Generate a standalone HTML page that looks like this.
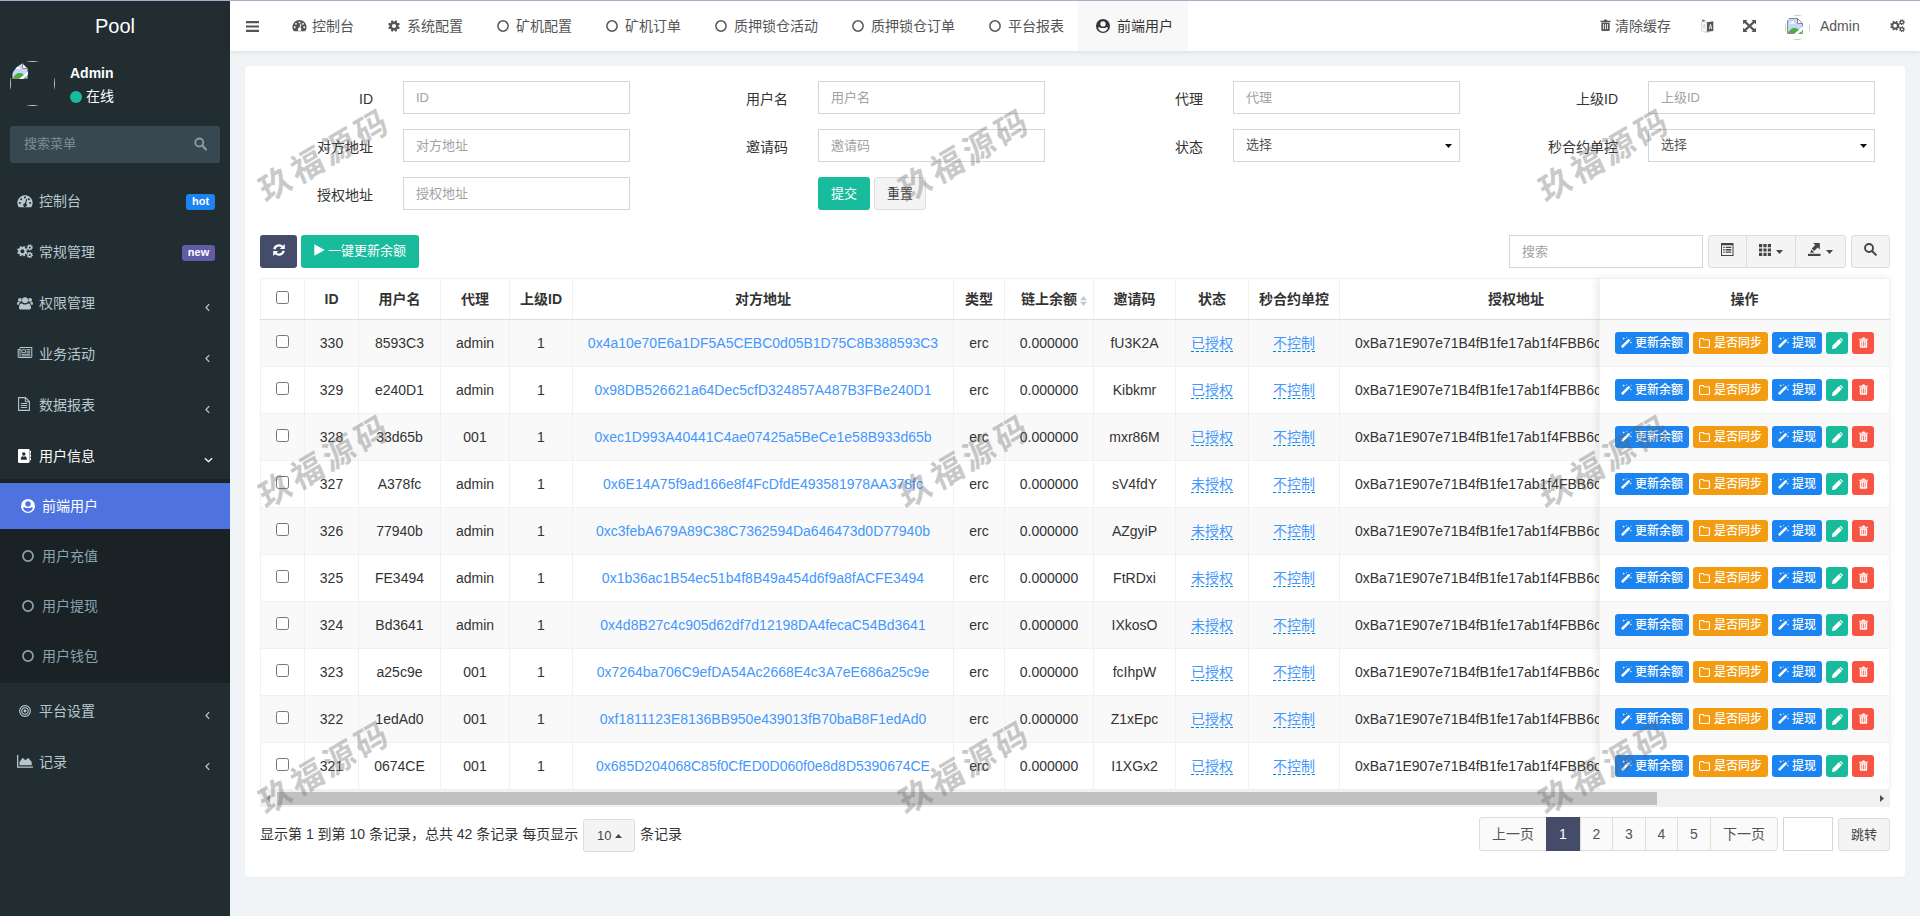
<!DOCTYPE html>
<html lang="zh-CN">
<head>
<meta charset="utf-8">
<title>Pool</title>
<style>
*{box-sizing:border-box;}
html,body{margin:0;padding:0;}
body{width:1920px;height:916px;overflow:hidden;position:relative;background:#f1f4f6;
  font-family:"Liberation Sans","Noto Sans CJK SC",sans-serif;font-size:14px;color:#333;line-height:20px;}
svg{display:block;}
.abs{position:absolute;}
/* top line */
#topline{position:absolute;left:0;top:0;width:1920px;height:1px;background:#a7aec9;z-index:50;}
/* sidebar */
#sidebar{position:absolute;left:0;top:0;width:230px;height:916px;background:#222d32;color:#b8c7ce;}
#logo{position:absolute;left:0;top:1px;width:230px;height:50px;line-height:50px;text-align:center;color:#fff;font-size:20px;}
#avatar{position:absolute;left:10px;top:61px;width:45px;height:45px;border-radius:50%;overflow:hidden;}
#avatar i{position:absolute;left:0;top:0;width:45px;height:45px;border:1px solid rgba(255,255,255,.75);display:block;}
.uname{position:absolute;left:70px;top:63px;color:#fff;font-weight:bold;font-size:14px;line-height:20px;}
.ustat{position:absolute;left:86px;top:86px;color:#fff;font-size:14px;line-height:20px;}
.udot{position:absolute;left:70px;top:91px;width:12px;height:12px;border-radius:50%;background:#18bc9c;}
#sbsearch{position:absolute;left:10px;top:126px;width:210px;height:37px;background:#374850;border-radius:3px;color:#7d8d95;line-height:36px;padding-left:14px;font-size:13px;}
.mi{position:absolute;left:0;width:230px;height:46px;line-height:46px;color:#b8c7ce;font-size:14px;}
.mi .ic{position:absolute;left:17px;top:15px;}
.mi .tx{position:absolute;left:39px;top:0;}
.mi .ar{position:absolute;left:205px;top:23px;}
.mi.open{color:#fff;}
.badge{position:absolute;top:16px;height:16px;line-height:15px;border-radius:3px;color:#fff;font-size:11px;font-weight:bold;text-align:center;}
#submenu{position:absolute;left:0;top:479px;width:230px;height:204px;background:#1a2226;}
.si{position:absolute;left:0;width:230px;height:46px;line-height:46px;color:#8aa4af;font-size:14px;}
.si .ic{position:absolute;left:21px;top:16px;}
.si .tx{position:absolute;left:42px;top:0;}
.si.act{background:#4e73df;color:#fff;}
/* header */
#header{position:absolute;left:230px;top:1px;width:1690px;height:50px;background:#fff;box-shadow:0 1px 4px rgba(0,21,41,.10);}
.tab{position:absolute;top:0;height:50px;line-height:50px;color:#555;font-size:14px;white-space:nowrap;}
.tab .ic{position:absolute;top:18px;}
.tab.act{background:#f8f8f8;color:#333;}
.hr{position:absolute;top:0;height:50px;line-height:50px;color:#555;font-size:14px;white-space:nowrap;}

#panel{position:absolute;left:245px;top:66px;width:1660px;height:811px;background:#fff;border-radius:4px;box-shadow:0 1px 2px rgba(0,0,0,.04);}
.lb{position:absolute;width:120px;text-align:right;line-height:20px;font-size:14px;color:#333;}
.inp{position:absolute;width:227px;height:33px;border:1px solid #d2d6de;background:#fff;line-height:31px;padding-left:12px;color:#a3a3a3;font-size:13px;}
.inp.sel{color:#555;line-height:29px;}
.btn{position:absolute;height:33px;line-height:31px;border-radius:3px;text-align:center;font-size:13px;border:1px solid transparent;white-space:nowrap;}
.bdef{background:#f4f4f4;border-color:#ddd;color:#444;}
#tbl{position:absolute;left:260px;top:278px;width:1339px;height:512px;overflow:hidden;}
#tbl table,#fix table{border-collapse:collapse;table-layout:fixed;}
#tbl th,#tbl td,#fix th,#fix td{border:1px solid #f1f1f1;text-align:center;padding:0;overflow:hidden;white-space:nowrap;font-size:14px;color:#333;}
#tbl th,#fix th{height:41px;font-weight:bold;border-bottom:1px solid #ddd;background:#fff;}
#tbl td,#fix td{height:47px;}
tr.o td{background:#f9f9f9;}
tr.e td{background:#fff;}
a.ad{color:#4397fd;text-decoration:none;}
a.ed{color:#4397fd;text-decoration:none;border-bottom:1px dashed #0088cc;padding-bottom:0;}
.cb{display:inline-block;width:13px;height:13px;border:1px solid #767676;border-radius:2.5px;background:#fff;vertical-align:middle;position:relative;top:-3px;}
#fix{position:absolute;left:1599px;top:278px;width:291px;height:512px;background:#fff;box-shadow:-2px 0 8px rgba(0,0,0,.09);overflow:hidden;}
.ob{display:inline-block;height:22px;line-height:20px;border-radius:3px;color:#fff;font-size:12px;font-weight:500;vertical-align:middle;position:relative;white-space:nowrap;text-align:left;border:1px solid transparent;}
.ob svg{position:absolute;}
.pg{position:absolute;top:817px;height:34px;line-height:32px;border:1px solid #ddd;background:#fafafa;color:#555;text-align:center;font-size:14px;}
.wm{position:absolute;width:240px;height:50px;line-height:50px;text-align:center;font-size:33px;font-weight:700;color:rgba(100,100,100,.34);transform:rotate(-30.5deg) skewX(-7deg);letter-spacing:4px;z-index:40;white-space:nowrap;font-family:"Noto Sans CJK SC","Liberation Sans",sans-serif;}

</style>
</head>
<body>
<div id="sidebar">
  <div id="logo">Pool</div>
  <div id="avatar"><i></i><svg class="abs" style="left:2px;top:2px" width="16" height="16" viewBox="0 0 16 16"><path d="M.500 .500h10l5 5v10H.500z" fill="#c5d6f6" stroke="#8a8a8a" stroke-width="1"/><path d="M10.500 .500v5h5z" fill="#fff" stroke="#8a8a8a" stroke-width="1" stroke-linejoin="round"/><path d="M2.500 5.800c0-.8.700-1.300 1.400-1.200.300-.900 1.200-1.400 2.100-1.200.900.200 1.500.900 1.500 1.700.500 0 .900.300.900.700z" fill="#fff"/><path d="M1 15c1.500-3 3.500-5 6.500-5s4.500 1.500 5.500 3l2 2z" fill="#4eae3a"/><path d="M6.800 16.200L16.200 8v3.200l-5.300 5z" fill="#fff"/></svg></div>
  <div class="uname">Admin</div>
  <div class="udot"></div>
  <div class="ustat">在线</div>
  <div id="sbsearch">搜索菜单
    <svg class="abs" style="left:184px;top:11px" width="13" height="14" viewBox="0 0 13 14"><circle cx="5.3" cy="5.5" r="4" fill="none" stroke="#8e9ba1" stroke-width="1.8"/><path d="M8.3 8.6l3.6 3.8" stroke="#8e9ba1" stroke-width="2.2" stroke-linecap="round"/></svg>
  </div>
  <div class="mi " style="top:178px"><svg class="ic" style="top:16px" width="16" height="14" viewBox="0 0 16 14"><path fill="#b8c7ce" fill-rule="evenodd" d="M8 1.2a7.6 7.6 0 0 0-6.5 11.5c.2.35.5.5.9.5h11.2c.4 0 .7-.15.9-.5A7.6 7.6 0 0 0 8 1.200zM7.00 3.60a1.0 1.0 0 1 0 2.00 0a1.0 1.0 0 1 0 -2.00 0zM3.20 5.20a1.0 1.0 0 1 0 2.00 0a1.0 1.0 0 1 0 -2.00 0zM10.80 5.20a1.0 1.0 0 1 0 2.00 0a1.0 1.0 0 1 0 -2.00 0zM1.90 8.90a1.0 1.0 0 1 0 2.00 0a1.0 1.0 0 1 0 -2.00 0zM12.10 8.90a1.0 1.0 0 1 0 2.00 0a1.0 1.0 0 1 0 -2.00 0zM9.2 4.9l-1.2 4.3a1.9 1.9 0 1 0 1.1.3l1.1-4.3z"/></svg><span class="tx">控制台</span><span class="badge" style="left:186px;width:29px;background:#1c84f0">hot</span></div>
<div class="mi " style="top:229px"><svg class="ic" style="top:15px" width="16" height="14" viewBox="0 0 16 14"><path fill="#b8c7ce" fill-rule="evenodd" d="M9.54 7.88L10.66 8.41L9.99 10.04L8.82 9.63L7.85 10.61L8.27 11.78L6.64 12.46L6.10 11.34L4.72 11.34L4.19 12.46L2.56 11.79L2.97 10.62L1.99 9.65L0.82 10.07L0.14 8.44L1.26 7.90L1.26 6.52L0.14 5.99L0.81 4.36L1.98 4.77L2.95 3.79L2.53 2.62L4.16 1.94L4.70 3.06L6.08 3.06L6.61 1.94L8.24 2.61L7.83 3.78L8.81 4.75L9.98 4.33L10.66 5.96L9.54 6.50zM3.40 7.20a2.0 2.0 0 1 0 4.00 0a2.0 2.0 0 1 0 -4.00 0z"/><path fill="#b8c7ce" fill-rule="evenodd" d="M15.20 3.33L16.00 3.52L15.79 4.54L14.98 4.40L14.54 5.05L14.98 5.74L14.11 6.32L13.64 5.65L12.87 5.80L12.68 6.60L11.66 6.39L11.80 5.58L11.15 5.14L10.46 5.58L9.88 4.71L10.55 4.24L10.40 3.47L9.60 3.28L9.81 2.26L10.62 2.40L11.06 1.75L10.62 1.06L11.49 0.48L11.96 1.15L12.73 1.00L12.92 0.20L13.94 0.41L13.80 1.22L14.45 1.66L15.14 1.22L15.72 2.09L15.05 2.56zM11.80 3.40a1.0 1.0 0 1 0 2.00 0a1.0 1.0 0 1 0 -2.00 0z"/><path fill="#b8c7ce" fill-rule="evenodd" d="M15.20 10.93L16.00 11.12L15.79 12.14L14.98 12.00L14.54 12.65L14.98 13.34L14.11 13.92L13.64 13.25L12.87 13.40L12.68 14.20L11.66 13.99L11.80 13.18L11.15 12.74L10.46 13.18L9.88 12.31L10.55 11.84L10.40 11.07L9.60 10.88L9.81 9.86L10.62 10.00L11.06 9.35L10.62 8.66L11.49 8.08L11.96 8.75L12.73 8.60L12.92 7.80L13.94 8.01L13.80 8.82L14.45 9.26L15.14 8.82L15.72 9.69L15.05 10.16zM11.80 11.00a1.0 1.0 0 1 0 2.00 0a1.0 1.0 0 1 0 -2.00 0z"/></svg><span class="tx">常规管理</span><span class="badge" style="left:182px;width:33px;background:#605ca8">new</span></div>
<div class="mi " style="top:280px"><svg class="ic" style="top:16px" width="16" height="14" viewBox="0 0 16 14"><circle cx="8" cy="4.2" r="3" fill="#b8c7ce"/><path fill="#b8c7ce" d="M3.4 13.4c-.9 0-1.4-.5-1.4-1.3 0-2.6.7-4.6 2.6-4.9.8.8 2 1.3 3.4 1.3s2.600-.5 3.400-1.300c1.900.3 2.600 2.300 2.600 4.900 0 .8-.5 1.300-1.400 1.300z"/><circle cx="2.900" cy="3.9" r="1.9" fill="#b8c7ce"/><circle cx="13.1" cy="3.9" r="1.9" fill="#b8c7ce"/><path fill="#b8c7ce" d="M.1 7.600c0-1.200.5-1.800 1.300-1.800.5.400 1.200.700 1.900.600-.9.600-1.500 1.400-1.700 2.700h-.6c-.6 0-.9-.6-.9-1.500zM15.900 7.600c0-1.200-.5-1.800-1.300-1.800-.5.400-1.200.700-1.900.600.9.600 1.500 1.400 1.700 2.700h.6c.6 0 .9-.6.9-1.500z"/></svg><span class="tx">权限管理</span><svg class="ar" width="5" height="9" viewBox="0 0 6 10"><path fill="none" stroke="#b8c7ce" stroke-width="1.500" d="M5 1L1.200 5 5 9"/></svg></div>
<div class="mi " style="top:331px"><svg class="ic" style="top:16px;left:17px" width="16" height="11" viewBox="0 0 16 12"><path fill="none" stroke="#b8c7ce" stroke-width="1.1" d="M2.600 .600h12.800v10.100c0 .400-.300.700-.700.700H1.300c-.400 0-.700-.300-.700-.700V2.600h2"/><path fill="none" stroke="#b8c7ce" stroke-width="1" d="M2.600 .600v10"/><path fill="none" stroke="#b8c7ce" stroke-width="1" d="M4.500 3h4v3.200h-4z"/><path stroke="#b8c7ce" stroke-width="1" d="M9.800 2.900h4M9.800 4.600h4M9.800 6.300h4M4.200 8h9.600M4.200 9.700h9.600"/></svg><span class="tx">业务活动</span><svg class="ar" width="5" height="9" viewBox="0 0 6 10"><path fill="none" stroke="#b8c7ce" stroke-width="1.500" d="M5 1L1.200 5 5 9"/></svg></div>
<div class="mi " style="top:382px"><svg class="ic" style="top:15px;left:18px" width="12" height="14" viewBox="0 0 12 14"><path fill="none" stroke="#b8c7ce" stroke-width="1.1" d="M.600 .600h6.800l4 4v8.800H.600z"/><path fill="none" stroke="#b8c7ce" stroke-width="1" d="M7.300 .700v4.100h4.100"/><path stroke="#b8c7ce" stroke-width="1" d="M2.800 6.500h6.400M2.800 8.500h6.400M2.800 10.500h6.400"/></svg><span class="tx">数据报表</span><svg class="ar" width="5" height="9" viewBox="0 0 6 10"><path fill="none" stroke="#b8c7ce" stroke-width="1.500" d="M5 1L1.200 5 5 9"/></svg></div>
<div class="mi open" style="top:433px"><svg class="ic" style="top:16px;left:18px" width="13" height="14" viewBox="0 0 13 14"><path fill="#fff" fill-rule="evenodd" d="M1.200 0h9.200c.7 0 1.200.5 1.200 1.200v11.600c0 .7-.5 1.200-1.200 1.200H1.200C.5 14 0 13.500 0 12.800V1.200C0 .5.5 0 1.200 0zM4.10 5.00a1.7 1.7 0 1 0 3.40 0a1.7 1.7 0 1 0 -3.40 0zM2.800 10.200c0-1.700.7-2.700 1.700-2.900.4.300.8.500 1.300.5s.9-.2 1.300-.5c1 .2 1.700 1.200 1.700 2.900 0 .4-.3.600-.7.600H3.500c-.4 0-.7-.2-.7-.6z"/><path fill="#fff" d="M12 1.800h.7c.2 0 .3.100.3.300v2c0 .2-.1.300-.3.300H12zM12 5.300h.7c.2 0 .3.100.3.300v2c0 .2-.1.300-.3.300H12zM12 8.800h.7c.2 0 .3.100.3.300v2c0 .2-.1.300-.3.300H12z"/></svg><span class="tx">用户信息</span><svg class="ar" style="left:204px;top:24px" width="9" height="6" viewBox="0 0 10 6"><path fill="none" stroke="#fff" stroke-width="1.500" d="M1 1l4 3.800L9 1"/></svg></div>
<div id="submenu">
<div class="si act" style="top:4px"><svg class="ic" width="14" height="14" viewBox="0 0 14 14"><path fill="#fff" fill-rule="evenodd" d="M0.00 7.00a7 7 0 1 1 14.00 0a7 7 0 1 1 -14.00 0zM4.30 4.90a2.7 2.7 0 1 0 5.40 0a2.7 2.7 0 1 0 -5.40 0zM3.000 7.900C4.200 8.700 5.600 9.100 7 9.100S9.800 8.700 11.000 7.900C11.800 8.200 11.900 9.000 11.600 9.800C10.700 11.700 9.000 12.700 7 12.700S3.300 11.700 2.400 9.800C2.100 9.000 2.200 8.200 3.000 7.900z"/></svg><span class="tx">前端用户</span></div>
<div class="si" style="top:54px"><svg class="ic" style="top:17px;left:22px" width="12" height="12" viewBox="0 0 12 12"><circle cx="6" cy="6" r="5.05" fill="none" stroke="#8aa4af" stroke-width="1.7"/></svg><span class="tx">用户充值</span></div>
<div class="si" style="top:104px"><svg class="ic" style="top:17px;left:22px" width="12" height="12" viewBox="0 0 12 12"><circle cx="6" cy="6" r="5.05" fill="none" stroke="#8aa4af" stroke-width="1.7"/></svg><span class="tx">用户提现</span></div>
<div class="si" style="top:154px"><svg class="ic" style="top:17px;left:22px" width="12" height="12" viewBox="0 0 12 12"><circle cx="6" cy="6" r="5.05" fill="none" stroke="#8aa4af" stroke-width="1.7"/></svg><span class="tx">用户钱包</span></div>
</div>
<div class="mi " style="top:688px"><svg class="ic" style="top:17px;left:19px" width="12" height="12" viewBox="0 0 13 13"><circle cx="6.500" cy="6.500" r="5.800" fill="none" stroke="#b8c7ce" stroke-width="1.200"/><circle cx="6.500" cy="6.500" r="3.500" fill="none" stroke="#b8c7ce" stroke-width="1.200"/><circle cx="6.500" cy="6.500" r="1.600" fill="#b8c7ce"/></svg><span class="tx">平台设置</span><svg class="ar" width="5" height="9" viewBox="0 0 6 10"><path fill="none" stroke="#b8c7ce" stroke-width="1.500" d="M5 1L1.200 5 5 9"/></svg></div>
<div class="mi " style="top:739px"><svg class="ic" style="top:16px" width="16" height="13" viewBox="0 0 16 13"><path fill="#b8c7ce" d="M0 0h1.300v11.500H16v1.300H0z"/><path fill="#b8c7ce" d="M2.500 10.300V7l3.200-4.300 2.600 2.600 3-2.300 3.400 4v3.300z"/></svg><span class="tx">记录</span><svg class="ar" width="5" height="9" viewBox="0 0 6 10"><path fill="none" stroke="#b8c7ce" stroke-width="1.500" d="M5 1L1.200 5 5 9"/></svg></div>

</div>
<div id="header">
  <svg class="abs" style="left:16px;top:20px" width="13" height="11" viewBox="0 0 13 11"><path fill="#555" d="M0 0h13v2.200H0zM0 4.400h13v2.200H0zM0 8.800h13V11H0z"/></svg><div class="tab" style="left:44px;width:96px"><svg class="ic" style="left:18px;top:18px" width="15" height="13" viewBox="0 0 16 14"><path fill="#555" fill-rule="evenodd" d="M8 1.2a7.6 7.6 0 0 0-6.5 11.5c.2.35.5.5.9.5h11.2c.4 0 .7-.15.9-.5A7.6 7.6 0 0 0 8 1.200zM7.00 3.60a1.0 1.0 0 1 0 2.00 0a1.0 1.0 0 1 0 -2.00 0zM3.20 5.20a1.0 1.0 0 1 0 2.00 0a1.0 1.0 0 1 0 -2.00 0zM10.80 5.20a1.0 1.0 0 1 0 2.00 0a1.0 1.0 0 1 0 -2.00 0zM1.90 8.90a1.0 1.0 0 1 0 2.00 0a1.0 1.0 0 1 0 -2.00 0zM12.10 8.90a1.0 1.0 0 1 0 2.00 0a1.0 1.0 0 1 0 -2.00 0zM9.2 4.9l-1.2 4.3a1.9 1.9 0 1 0 1.1.3l1.1-4.3z"/></svg><span class="abs" style="left:38px;top:0">控制台</span></div>
<div class="tab" style="left:140px;width:109px"><svg class="ic" style="left:18px;top:19px" width="12" height="12" viewBox="0 0 12 12"><path fill="#555" fill-rule="evenodd" d="M10.54 6.74L11.85 7.34L11.10 9.16L9.75 8.66L8.68 9.74L9.18 11.09L7.38 11.84L6.77 10.54L5.26 10.54L4.66 11.85L2.84 11.10L3.34 9.75L2.26 8.68L0.91 9.18L0.16 7.38L1.46 6.77L1.46 5.26L0.15 4.66L0.90 2.84L2.25 3.34L3.32 2.26L2.82 0.91L4.62 0.16L5.23 1.46L6.74 1.46L7.34 0.15L9.16 0.90L8.66 2.25L9.74 3.32L11.09 2.82L11.84 4.62L10.54 5.23zM3.90 6.00a2.1 2.1 0 1 0 4.20 0a2.1 2.1 0 1 0 -4.20 0z"/></svg><span class="abs" style="left:37px;top:0">系统配置</span></div>
<div class="tab" style="left:249px;width:109px"><svg class="ic" style="left:18px;top:19px" width="12" height="12" viewBox="0 0 12 12"><circle cx="6" cy="6" r="5.15" fill="none" stroke="#555" stroke-width="1.5"/></svg><span class="abs" style="left:37px;top:0">矿机配置</span></div>
<div class="tab" style="left:358px;width:109px"><svg class="ic" style="left:18px;top:19px" width="12" height="12" viewBox="0 0 12 12"><circle cx="6" cy="6" r="5.15" fill="none" stroke="#555" stroke-width="1.5"/></svg><span class="abs" style="left:37px;top:0">矿机订单</span></div>
<div class="tab" style="left:467px;width:137px"><svg class="ic" style="left:18px;top:19px" width="12" height="12" viewBox="0 0 12 12"><circle cx="6" cy="6" r="5.15" fill="none" stroke="#555" stroke-width="1.5"/></svg><span class="abs" style="left:37px;top:0">质押锁仓活动</span></div>
<div class="tab" style="left:604px;width:137px"><svg class="ic" style="left:18px;top:19px" width="12" height="12" viewBox="0 0 12 12"><circle cx="6" cy="6" r="5.15" fill="none" stroke="#555" stroke-width="1.5"/></svg><span class="abs" style="left:37px;top:0">质押锁仓订单</span></div>
<div class="tab" style="left:741px;width:107px"><svg class="ic" style="left:18px;top:19px" width="12" height="12" viewBox="0 0 12 12"><circle cx="6" cy="6" r="5.15" fill="none" stroke="#555" stroke-width="1.5"/></svg><span class="abs" style="left:37px;top:0">平台报表</span></div>
<div class="tab act" style="left:848px;width:110px"><svg class="ic" style="left:18px;top:18px" width="14" height="14" viewBox="0 0 14 14"><path fill="#333" fill-rule="evenodd" d="M0.00 7.00a7 7 0 1 1 14.00 0a7 7 0 1 1 -14.00 0zM4.30 4.90a2.7 2.7 0 1 0 5.40 0a2.7 2.7 0 1 0 -5.40 0zM3.000 7.900C4.200 8.700 5.600 9.100 7 9.100S9.800 8.700 11.000 7.900C11.800 8.200 11.900 9.000 11.600 9.800C10.700 11.700 9.000 12.700 7 12.700S3.300 11.700 2.400 9.800C2.100 9.000 2.200 8.200 3.000 7.900z"/></svg><span class="abs" style="left:39px;top:0">前端用户</span></div>
<div class="hr" style="left:1370px"><svg class="abs" style="left:0;top:18px" width="11" height="12" viewBox="0 0 11 13"><path fill="#555" d="M0 1.800h3.500L4.300.500h2.400l.8 1.300H11V3.200H0z"/><path fill="#555" fill-rule="evenodd" d="M1 3.900h9v7.900c0 .7-.5 1.200-1.200 1.200H2.200C1.500 13 1 12.500 1 11.800zM3 5.300v5.900h.9V5.300zM5.050 5.300v5.900h.9V5.300zM7.100 5.300v5.900H8V5.300z"/></svg><span class="abs" style="left:15px;top:0">清除缓存</span></div>
<svg class="abs" style="left:1471px;top:18px" width="13" height="14" viewBox="0 0 13 14"><path fill="#fff" stroke="#c4c4c4" stroke-width=".7" d="M.500 2.800l5.500 .800v9L.500 11.600z"/><path fill="#555" d="M1.300 .300l3.600 1.700-3.600 .500z"/><path fill="#555" d="M6 3.200l6.300-.900v9.600L6 12.800z"/><path fill="#fff" d="M7.900 10.200l1.200-5h.9l1.200 5h-.8l-.25-1.100H8.950l-.25 1.100zm1.200-1.800h.9l-.45-2z"/><path stroke="#b9b9c9" stroke-width=".7" fill="none" d="M1.800 6.200c1 .3 2 .3 3-.2M3.300 5v1.200c0 1.500-.6 2.800-1.600 3.500M2.300 7.500c.6 1 1.500 1.600 2.500 1.900"/><path stroke="#c4c4c4" stroke-width=".7" fill="none" d="M3.500 13.600h4.500"/></svg><svg preserveAspectRatio="none" class="abs" style="left:1513px;top:19px" width="13" height="12" viewBox="0 0 14 14"><path fill="#555" d="M0 0h5L3.400 1.600 7 5.200 10.600 1.600 9 0h5v5l-1.600-1.600L8.800 7l3.600 3.600L14 9v5H9l1.600-1.600L7 8.800l-3.600 3.600L5 14H0V9l1.600 1.600L5.200 7 1.600 3.400 0 5z"/></svg><div class="abs" style="left:1555px;top:14px;width:25px;height:25px;border-radius:50%;overflow:hidden"><i style="position:absolute;left:0;top:0;width:25px;height:25px;border:1px solid #c8c8c8;display:block"></i><svg class="abs" style="left:2px;top:3px" width="16" height="16" viewBox="0 0 16 16"><path d="M.500 .500h10l5 5v10H.500z" fill="#c5d6f6" stroke="#8a8a8a" stroke-width="1"/><path d="M10.500 .500v5h5z" fill="#fff" stroke="#8a8a8a" stroke-width="1" stroke-linejoin="round"/><path d="M2.500 5.800c0-.8.700-1.300 1.400-1.200.300-.900 1.200-1.400 2.100-1.200.900.200 1.500.900 1.500 1.700.500 0 .900.300.900.700z" fill="#fff"/><path d="M1 15c1.500-3 3.500-5 6.500-5s4.500 1.500 5.500 3l2 2z" fill="#4eae3a"/><path d="M6.800 16.200L16.200 8v3.200l-5.300 5z" fill="#fff"/></svg></div><div class="hr" style="left:1590px">Admin</div><svg class="abs" style="left:1660px;top:18px" width="15" height="13" viewBox="0 0 16 14"><path fill="#555" fill-rule="evenodd" d="M9.54 7.88L10.66 8.41L9.99 10.04L8.82 9.63L7.85 10.61L8.27 11.78L6.64 12.46L6.10 11.34L4.72 11.34L4.19 12.46L2.56 11.79L2.97 10.62L1.99 9.65L0.82 10.07L0.14 8.44L1.26 7.90L1.26 6.52L0.14 5.99L0.81 4.36L1.98 4.77L2.95 3.79L2.53 2.62L4.16 1.94L4.70 3.06L6.08 3.06L6.61 1.94L8.24 2.61L7.83 3.78L8.81 4.75L9.98 4.33L10.66 5.96L9.54 6.50zM3.40 7.20a2.0 2.0 0 1 0 4.00 0a2.0 2.0 0 1 0 -4.00 0z"/><path fill="#555" fill-rule="evenodd" d="M15.20 3.33L16.00 3.52L15.79 4.54L14.98 4.40L14.54 5.05L14.98 5.74L14.11 6.32L13.64 5.65L12.87 5.80L12.68 6.60L11.66 6.39L11.80 5.58L11.15 5.14L10.46 5.58L9.88 4.71L10.55 4.24L10.40 3.47L9.60 3.28L9.81 2.26L10.62 2.40L11.06 1.75L10.62 1.06L11.49 0.48L11.96 1.15L12.73 1.00L12.92 0.20L13.94 0.41L13.80 1.22L14.45 1.66L15.14 1.22L15.72 2.09L15.05 2.56zM11.80 3.40a1.0 1.0 0 1 0 2.00 0a1.0 1.0 0 1 0 -2.00 0z"/><path fill="#555" fill-rule="evenodd" d="M15.20 10.93L16.00 11.12L15.79 12.14L14.98 12.00L14.54 12.65L14.98 13.34L14.11 13.92L13.64 13.25L12.87 13.40L12.68 14.20L11.66 13.99L11.80 13.18L11.15 12.74L10.46 13.18L9.88 12.31L10.55 11.84L10.40 11.07L9.60 10.88L9.81 9.86L10.62 10.00L11.06 9.35L10.62 8.66L11.49 8.08L11.96 8.75L12.73 8.60L12.92 7.80L13.94 8.01L13.80 8.82L14.45 9.26L15.14 8.82L15.72 9.69L15.05 10.16zM11.80 11.00a1.0 1.0 0 1 0 2.00 0a1.0 1.0 0 1 0 -2.00 0z"/></svg>
</div>
<div id="topline"></div>
<div id="panel"></div>
<div class="lb" style="left:253px;top:89px">ID</div><div class="inp" style="left:403px;top:81px">ID</div>
<div class="lb" style="left:668px;top:89px">用户名</div><div class="inp" style="left:818px;top:81px">用户名</div>
<div class="lb" style="left:1083px;top:89px">代理</div><div class="inp" style="left:1233px;top:81px">代理</div>
<div class="lb" style="left:1498px;top:89px">上级ID</div><div class="inp" style="left:1648px;top:81px">上级ID</div>
<div class="lb" style="left:253px;top:137px">对方地址</div><div class="inp" style="left:403px;top:129px">对方地址</div>
<div class="lb" style="left:668px;top:137px">邀请码</div><div class="inp" style="left:818px;top:129px">邀请码</div>
<div class="lb" style="left:1083px;top:137px">状态</div><div class="inp sel" style="left:1233px;top:129px">选择<svg class="abs" style="left:211px;top:14px" width="7" height="4" viewBox="0 0 7 4"><path fill="#111" d="M0 0h7L3.500 4z"/></svg></div>
<div class="lb" style="left:1498px;top:137px">秒合约单控</div><div class="inp sel" style="left:1648px;top:129px">选择<svg class="abs" style="left:211px;top:14px" width="7" height="4" viewBox="0 0 7 4"><path fill="#111" d="M0 0h7L3.500 4z"/></svg></div>
<div class="lb" style="left:253px;top:185px">授权地址</div><div class="inp" style="left:403px;top:177px">授权地址</div>
<div class="btn" style="left:818px;top:177px;width:52px;background:#18bc9c;color:#fff">提交</div><div class="btn bdef" style="left:874px;top:177px;width:52px">重置</div>
<div class="btn" style="left:260px;top:235px;width:37px;background:#444c69"><svg class="abs" style="left:12px;top:8px" width="12" height="12" viewBox="0 0 12 12"><path fill="none" stroke="#fff" stroke-width="2.300" d="M1.300 5.200A4.800 4.800 0 0 1 9.400 2.800M10.700 6.800A4.800 4.800 0 0 1 2.600 9.200"/><path fill="#fff" d="M11.800 .100v5H6.800zM.200 11.900v-5h5z"/></svg></div><div class="btn" style="left:301px;top:235px;width:118px;background:#18bc9c;color:#fff;text-align:left;padding-left:26px;line-height:30px"><svg class="abs" style="left:12px;top:8px" width="11" height="12" viewBox="0 0 11 12"><path fill="#fff" d="M.300 .300l10.400 5.700L.300 11.700z"/></svg>一键更新余额</div>
<div class="inp" style="left:1509px;top:235px;width:194px;height:33px">搜索</div><div class="btn bdef" style="left:1708px;top:235px;width:39px;border-radius:3px 0 0 3px"><svg class="abs" style="left:12px;top:7px" width="13" height="13" viewBox="0 0 13 13"><path fill="#444" fill-rule="evenodd" d="M0 0h12.500v13H0zM1 2.200v9.800h10.500V2.200z"/><path fill="#444" d="M2.200 3.700h1.400v1.300H2.200zM2.200 6.100h1.400v1.300H2.200zM2.200 8.500h1.400v1.300H2.200zM4.600 3.700h5.700v1.300H4.600zM4.600 6.100h5.700v1.300H4.600zM4.600 8.500h5.700v1.300H4.600z"/></svg></div><div class="btn bdef" style="left:1746px;top:235px;width:50px;border-radius:0"><svg class="abs" style="left:12px;top:8px" width="12" height="12" viewBox="0 0 12 12"><path fill="#444" d="M0.0 0.0h3.200v3.200h-3.200zM4.4 0.0h3.200v3.200h-3.200zM8.8 0.0h3.200v3.200h-3.200zM0.0 4.4h3.200v3.200h-3.200zM4.4 4.4h3.200v3.200h-3.200zM8.8 4.4h3.200v3.200h-3.200zM0.0 8.8h3.200v3.200h-3.200zM4.4 8.8h3.200v3.200h-3.200zM8.8 8.8h3.200v3.200h-3.200z"/></svg><svg class="abs" style="left:29px;top:14px" width="7" height="4" viewBox="0 0 7 4"><path fill="#444" d="M0 0h7L3.500 4z"/></svg></div><div class="btn bdef" style="left:1795px;top:235px;width:51px;border-radius:0 3px 3px 0"><svg class="abs" style="left:12px;top:7px" width="13" height="13" viewBox="0 0 13 13"><path fill="#444" d="M0 10.800h12.500V13H0z"/><path fill="#444" d="M5.200 0h6.600v6.600L9.700 4.500 6.200 8 3.800 5.600 7.300 2.100z"/><path fill="#444" d="M2.200 9.800l1.200-3.200 2.600 2.600.2.600z"/></svg><svg class="abs" style="left:30px;top:14px" width="7" height="4" viewBox="0 0 7 4"><path fill="#444" d="M0 0h7L3.500 4z"/></svg></div><div class="btn bdef" style="left:1851px;top:235px;width:39px"><svg class="abs" style="left:12px;top:7px" width="13" height="13" viewBox="0 0 14 14"><circle cx="5.400" cy="5.400" r="4.300" fill="none" stroke="#444" stroke-width="2"/><path d="M8.700 8.700l4.100 4.100" stroke="#444" stroke-width="2.200" stroke-linecap="round"/></svg></div>
<div id="tbl"><table style="width:1432px"><colgroup><col style="width:44px"><col style="width:54px"><col style="width:82px"><col style="width:69px"><col style="width:63px"><col style="width:381px"><col style="width:51px"><col style="width:89px"><col style="width:82px"><col style="width:73px"><col style="width:91px"><col style="width:353px"></colgroup><thead><tr><th><span class="cb"></span></th><th>ID</th><th>用户名</th><th>代理</th><th>上级ID</th><th>对方地址</th><th>类型</th><th><span style="position:relative">链上余额<svg style="position:absolute;left:59px;top:3px" width="7" height="14" viewBox="0 0 9 14"><path fill="#c8c8c8" d="M0 6h9L4.500 .500zM0 8h9l-4.500 5.500z"/></svg></span></th><th>邀请码</th><th>状态</th><th>秒合约单控</th><th>授权地址</th></tr></thead><tbody>
<tr class="o"><td><span class="cb"></span></td><td>330</td><td>8593C3</td><td>admin</td><td>1</td><td><a class="ad">0x4a10e70E6a1DF5A5CEBC0d05B1D75C8B388593C3</a></td><td>erc</td><td>0.000000</td><td>fU3K2A</td><td><a class="ed">已授权</a></td><td><a class="ed">不控制</a></td><td style="text-align:left;padding-left:15px">0xBa71E907e71B4fB1fe17ab1f4FBB6c3A9d2E01F7</td></tr>
<tr class="e"><td><span class="cb"></span></td><td>329</td><td>e240D1</td><td>admin</td><td>1</td><td><a class="ad">0x98DB526621a64Dec5cfD324857A487B3FBe240D1</a></td><td>erc</td><td>0.000000</td><td>Kibkmr</td><td><a class="ed">已授权</a></td><td><a class="ed">不控制</a></td><td style="text-align:left;padding-left:15px">0xBa71E907e71B4fB1fe17ab1f4FBB6c3A9d2E01F7</td></tr>
<tr class="o"><td><span class="cb"></span></td><td>328</td><td>33d65b</td><td>001</td><td>1</td><td><a class="ad">0xec1D993A40441C4ae07425a5BeCe1e58B933d65b</a></td><td>erc</td><td>0.000000</td><td>mxr86M</td><td><a class="ed">已授权</a></td><td><a class="ed">不控制</a></td><td style="text-align:left;padding-left:15px">0xBa71E907e71B4fB1fe17ab1f4FBB6c3A9d2E01F7</td></tr>
<tr class="e"><td><span class="cb"></span></td><td>327</td><td>A378fc</td><td>admin</td><td>1</td><td><a class="ad">0x6E14A75f9ad166e8f4FcDfdE493581978AA378fc</a></td><td>erc</td><td>0.000000</td><td>sV4fdY</td><td><a class="ed">未授权</a></td><td><a class="ed">不控制</a></td><td style="text-align:left;padding-left:15px">0xBa71E907e71B4fB1fe17ab1f4FBB6c3A9d2E01F7</td></tr>
<tr class="o"><td><span class="cb"></span></td><td>326</td><td>77940b</td><td>admin</td><td>1</td><td><a class="ad">0xc3febA679A89C38C7362594Da646473d0D77940b</a></td><td>erc</td><td>0.000000</td><td>AZgyiP</td><td><a class="ed">未授权</a></td><td><a class="ed">不控制</a></td><td style="text-align:left;padding-left:15px">0xBa71E907e71B4fB1fe17ab1f4FBB6c3A9d2E01F7</td></tr>
<tr class="e"><td><span class="cb"></span></td><td>325</td><td>FE3494</td><td>admin</td><td>1</td><td><a class="ad">0x1b36ac1B54ec51b4f8B49a454d6f9a8fACFE3494</a></td><td>erc</td><td>0.000000</td><td>FtRDxi</td><td><a class="ed">未授权</a></td><td><a class="ed">不控制</a></td><td style="text-align:left;padding-left:15px">0xBa71E907e71B4fB1fe17ab1f4FBB6c3A9d2E01F7</td></tr>
<tr class="o"><td><span class="cb"></span></td><td>324</td><td>Bd3641</td><td>admin</td><td>1</td><td><a class="ad">0x4d8B27c4c905d62df7d12198DA4fecaC54Bd3641</a></td><td>erc</td><td>0.000000</td><td>IXkosO</td><td><a class="ed">未授权</a></td><td><a class="ed">不控制</a></td><td style="text-align:left;padding-left:15px">0xBa71E907e71B4fB1fe17ab1f4FBB6c3A9d2E01F7</td></tr>
<tr class="e"><td><span class="cb"></span></td><td>323</td><td>a25c9e</td><td>001</td><td>1</td><td><a class="ad">0x7264ba706C9efDA54Ac2668E4c3A7eE686a25c9e</a></td><td>erc</td><td>0.000000</td><td>fcIhpW</td><td><a class="ed">已授权</a></td><td><a class="ed">不控制</a></td><td style="text-align:left;padding-left:15px">0xBa71E907e71B4fB1fe17ab1f4FBB6c3A9d2E01F7</td></tr>
<tr class="o"><td><span class="cb"></span></td><td>322</td><td>1edAd0</td><td>001</td><td>1</td><td><a class="ad">0xf1811123E8136BB950e439013fB70baB8F1edAd0</a></td><td>erc</td><td>0.000000</td><td>Z1xEpc</td><td><a class="ed">已授权</a></td><td><a class="ed">不控制</a></td><td style="text-align:left;padding-left:15px">0xBa71E907e71B4fB1fe17ab1f4FBB6c3A9d2E01F7</td></tr>
<tr class="e"><td><span class="cb"></span></td><td>321</td><td>0674CE</td><td>001</td><td>1</td><td><a class="ad">0x685D204068C85f0CfED0D060f0e8d8D5390674CE</a></td><td>erc</td><td>0.000000</td><td>I1XGx2</td><td><a class="ed">已授权</a></td><td><a class="ed">不控制</a></td><td style="text-align:left;padding-left:15px">0xBa71E907e71B4fB1fe17ab1f4FBB6c3A9d2E01F7</td></tr>
</tbody></table></div>
<div id="fix"><table style="width:291px"><thead><tr><th>操作</th></tr></thead><tbody>
<tr class="o"><td style="text-align:left;padding-left:15px;font-size:0"><span class="ob" style="width:74px;background:#1c84f0;padding-left:19px"><svg style="left:5px;top:4px" width="11" height="11" viewBox="0 0 12 12"><path fill="#fff" d="M0 10.200L8.300 1.900l1.900 1.900-8.300 8.300z"/><path fill="#fff" d="M3 .200l.45 1.150 1.150.45-1.150.45L3 3.400l-.45-1.150-1.150-.45 1.150-.45zM10.800 5l.35.85.85.35-.85.35-.35.85-.35-.85-.85-.35.85-.35zM6.200 0l.25.600.600.250-.600.250-.250.600-.250-.600-.600-.250.600-.250zM11 .500l.25.600.600.250-.600.250-.250.600-.250-.600-.600-.250.600-.250z"/></svg>更新余额</span><span class="ob" style="width:75px;background:#f39c12;margin-left:4px;padding-left:20px"><svg style="left:5px;top:5px" width="11" height="10" viewBox="0 0 12 11"><path fill="none" stroke="#fff" stroke-width="1.200" d="M.600 1.600c0-.6.4-1 1-1h2.600c.6 0 1 .4 1 1v.4h5.200c.6 0 1 .4 1 1v6.400c0 .6-.4 1-1 1H1.600c-.6 0-1-.4-1-1z"/></svg>是否同步</span><span class="ob" style="width:50px;background:#1c84f0;margin-left:4px;padding-left:19px"><svg style="left:5px;top:4px" width="11" height="11" viewBox="0 0 12 12"><path fill="#fff" d="M0 10.200L8.300 1.900l1.900 1.900-8.300 8.300z"/><path fill="#fff" d="M3 .200l.45 1.150 1.150.45-1.150.45L3 3.400l-.45-1.150-1.150-.45 1.150-.45zM10.800 5l.35.85.85.35-.85.35-.35.85-.35-.85-.85-.35.85-.35zM6.200 0l.25.600.600.250-.600.250-.250.600-.250-.600-.600-.250.600-.250zM11 .500l.25.600.600.250-.600.250-.250.600-.250-.600-.600-.250.600-.250z"/></svg>提现</span><span class="ob" style="width:22px;background:#18bc9c;margin-left:4px"><svg style="left:5px;top:5px" width="11" height="11" viewBox="0 0 12 12"><path fill="#fff" d="M0 12l.6-3.700L7.700 1.200l3.100 3.100-7.100 7.100zM8.400 .600l.4-.4c.3-.3.800-.3 1.100 0l1.900 1.900c.3.300.3.800 0 1.100l-.4.400z"/></svg></span><span class="ob" style="width:22px;background:#f75444;margin-left:4px"><svg style="left:6px;top:4px" width="9" height="11" viewBox="0 0 11 13"><path fill="#fff" d="M0 1.800h3.500L4.300.500h2.400l.8 1.300H11V3.200H0z"/><path fill="#fff" fill-rule="evenodd" d="M1 3.900h9v7.900c0 .7-.5 1.200-1.200 1.200H2.200C1.500 13 1 12.500 1 11.800zM3 5.300v5.900h.9V5.300zM5.050 5.300v5.900h.9V5.300zM7.100 5.300v5.900H8V5.300z"/></svg></span></td></tr>
<tr class="e"><td style="text-align:left;padding-left:15px;font-size:0"><span class="ob" style="width:74px;background:#1c84f0;padding-left:19px"><svg style="left:5px;top:4px" width="11" height="11" viewBox="0 0 12 12"><path fill="#fff" d="M0 10.200L8.300 1.900l1.900 1.900-8.300 8.300z"/><path fill="#fff" d="M3 .200l.45 1.150 1.150.45-1.150.45L3 3.400l-.45-1.150-1.150-.45 1.150-.45zM10.800 5l.35.85.85.35-.85.35-.35.85-.35-.85-.85-.35.85-.35zM6.200 0l.25.600.600.250-.600.250-.250.600-.250-.600-.600-.250.600-.250zM11 .500l.25.600.600.250-.600.250-.250.600-.250-.600-.600-.250.600-.250z"/></svg>更新余额</span><span class="ob" style="width:75px;background:#f39c12;margin-left:4px;padding-left:20px"><svg style="left:5px;top:5px" width="11" height="10" viewBox="0 0 12 11"><path fill="none" stroke="#fff" stroke-width="1.200" d="M.600 1.600c0-.6.4-1 1-1h2.600c.6 0 1 .4 1 1v.4h5.200c.6 0 1 .4 1 1v6.400c0 .6-.4 1-1 1H1.600c-.6 0-1-.4-1-1z"/></svg>是否同步</span><span class="ob" style="width:50px;background:#1c84f0;margin-left:4px;padding-left:19px"><svg style="left:5px;top:4px" width="11" height="11" viewBox="0 0 12 12"><path fill="#fff" d="M0 10.200L8.300 1.900l1.900 1.900-8.300 8.300z"/><path fill="#fff" d="M3 .200l.45 1.150 1.150.45-1.150.45L3 3.400l-.45-1.150-1.150-.45 1.150-.45zM10.800 5l.35.85.85.35-.85.35-.35.85-.35-.85-.85-.35.85-.35zM6.200 0l.25.600.600.250-.600.250-.250.600-.250-.600-.600-.250.600-.250zM11 .500l.25.600.600.250-.600.250-.250.600-.250-.600-.600-.250.600-.250z"/></svg>提现</span><span class="ob" style="width:22px;background:#18bc9c;margin-left:4px"><svg style="left:5px;top:5px" width="11" height="11" viewBox="0 0 12 12"><path fill="#fff" d="M0 12l.6-3.700L7.700 1.200l3.100 3.100-7.100 7.100zM8.400 .600l.4-.4c.3-.3.800-.3 1.100 0l1.900 1.900c.3.300.3.800 0 1.100l-.4.400z"/></svg></span><span class="ob" style="width:22px;background:#f75444;margin-left:4px"><svg style="left:6px;top:4px" width="9" height="11" viewBox="0 0 11 13"><path fill="#fff" d="M0 1.800h3.500L4.300.500h2.400l.8 1.300H11V3.200H0z"/><path fill="#fff" fill-rule="evenodd" d="M1 3.900h9v7.900c0 .7-.5 1.200-1.200 1.200H2.200C1.500 13 1 12.500 1 11.800zM3 5.300v5.900h.9V5.300zM5.050 5.300v5.900h.9V5.300zM7.100 5.300v5.900H8V5.300z"/></svg></span></td></tr>
<tr class="o"><td style="text-align:left;padding-left:15px;font-size:0"><span class="ob" style="width:74px;background:#1c84f0;padding-left:19px"><svg style="left:5px;top:4px" width="11" height="11" viewBox="0 0 12 12"><path fill="#fff" d="M0 10.200L8.300 1.900l1.900 1.900-8.300 8.300z"/><path fill="#fff" d="M3 .200l.45 1.150 1.150.45-1.150.45L3 3.400l-.45-1.150-1.150-.45 1.150-.45zM10.800 5l.35.85.85.35-.85.35-.35.85-.35-.85-.85-.35.85-.35zM6.200 0l.25.600.600.250-.600.250-.250.600-.250-.600-.600-.250.600-.250zM11 .500l.25.600.600.250-.600.250-.250.600-.250-.600-.600-.250.600-.250z"/></svg>更新余额</span><span class="ob" style="width:75px;background:#f39c12;margin-left:4px;padding-left:20px"><svg style="left:5px;top:5px" width="11" height="10" viewBox="0 0 12 11"><path fill="none" stroke="#fff" stroke-width="1.200" d="M.600 1.600c0-.6.4-1 1-1h2.600c.6 0 1 .4 1 1v.4h5.200c.6 0 1 .4 1 1v6.400c0 .6-.4 1-1 1H1.600c-.6 0-1-.4-1-1z"/></svg>是否同步</span><span class="ob" style="width:50px;background:#1c84f0;margin-left:4px;padding-left:19px"><svg style="left:5px;top:4px" width="11" height="11" viewBox="0 0 12 12"><path fill="#fff" d="M0 10.200L8.300 1.900l1.900 1.900-8.300 8.300z"/><path fill="#fff" d="M3 .200l.45 1.150 1.150.45-1.150.45L3 3.400l-.45-1.150-1.150-.45 1.150-.45zM10.800 5l.35.85.85.35-.85.35-.35.85-.35-.85-.85-.35.85-.35zM6.200 0l.25.600.600.250-.600.250-.250.600-.250-.600-.600-.250.600-.250zM11 .500l.25.600.600.250-.600.250-.250.600-.250-.600-.600-.250.600-.250z"/></svg>提现</span><span class="ob" style="width:22px;background:#18bc9c;margin-left:4px"><svg style="left:5px;top:5px" width="11" height="11" viewBox="0 0 12 12"><path fill="#fff" d="M0 12l.6-3.700L7.700 1.200l3.100 3.100-7.100 7.100zM8.400 .600l.4-.4c.3-.3.800-.3 1.100 0l1.900 1.900c.3.300.3.800 0 1.100l-.4.400z"/></svg></span><span class="ob" style="width:22px;background:#f75444;margin-left:4px"><svg style="left:6px;top:4px" width="9" height="11" viewBox="0 0 11 13"><path fill="#fff" d="M0 1.800h3.500L4.300.500h2.400l.8 1.300H11V3.200H0z"/><path fill="#fff" fill-rule="evenodd" d="M1 3.900h9v7.900c0 .7-.5 1.200-1.200 1.200H2.200C1.500 13 1 12.500 1 11.800zM3 5.300v5.900h.9V5.300zM5.050 5.300v5.900h.9V5.300zM7.100 5.300v5.900H8V5.300z"/></svg></span></td></tr>
<tr class="e"><td style="text-align:left;padding-left:15px;font-size:0"><span class="ob" style="width:74px;background:#1c84f0;padding-left:19px"><svg style="left:5px;top:4px" width="11" height="11" viewBox="0 0 12 12"><path fill="#fff" d="M0 10.200L8.300 1.900l1.900 1.900-8.300 8.300z"/><path fill="#fff" d="M3 .200l.45 1.150 1.150.45-1.150.45L3 3.400l-.45-1.150-1.150-.45 1.150-.45zM10.800 5l.35.85.85.35-.85.35-.35.85-.35-.85-.85-.35.85-.35zM6.200 0l.25.600.600.250-.600.250-.250.600-.250-.600-.600-.250.600-.250zM11 .500l.25.600.600.250-.600.250-.250.600-.250-.600-.600-.250.600-.250z"/></svg>更新余额</span><span class="ob" style="width:75px;background:#f39c12;margin-left:4px;padding-left:20px"><svg style="left:5px;top:5px" width="11" height="10" viewBox="0 0 12 11"><path fill="none" stroke="#fff" stroke-width="1.200" d="M.600 1.600c0-.6.4-1 1-1h2.600c.6 0 1 .4 1 1v.4h5.200c.6 0 1 .4 1 1v6.400c0 .6-.4 1-1 1H1.600c-.6 0-1-.4-1-1z"/></svg>是否同步</span><span class="ob" style="width:50px;background:#1c84f0;margin-left:4px;padding-left:19px"><svg style="left:5px;top:4px" width="11" height="11" viewBox="0 0 12 12"><path fill="#fff" d="M0 10.200L8.300 1.900l1.900 1.900-8.300 8.300z"/><path fill="#fff" d="M3 .200l.45 1.150 1.150.45-1.150.45L3 3.400l-.45-1.150-1.150-.45 1.150-.45zM10.800 5l.35.85.85.35-.85.35-.35.85-.35-.85-.85-.35.85-.35zM6.200 0l.25.600.600.250-.600.250-.250.600-.250-.600-.600-.250.600-.250zM11 .500l.25.600.600.250-.600.250-.250.600-.250-.600-.600-.250.600-.250z"/></svg>提现</span><span class="ob" style="width:22px;background:#18bc9c;margin-left:4px"><svg style="left:5px;top:5px" width="11" height="11" viewBox="0 0 12 12"><path fill="#fff" d="M0 12l.6-3.700L7.700 1.200l3.100 3.100-7.100 7.100zM8.400 .600l.4-.4c.3-.3.800-.3 1.100 0l1.900 1.900c.3.300.3.800 0 1.100l-.4.400z"/></svg></span><span class="ob" style="width:22px;background:#f75444;margin-left:4px"><svg style="left:6px;top:4px" width="9" height="11" viewBox="0 0 11 13"><path fill="#fff" d="M0 1.800h3.500L4.300.500h2.400l.8 1.300H11V3.200H0z"/><path fill="#fff" fill-rule="evenodd" d="M1 3.900h9v7.900c0 .7-.5 1.200-1.200 1.200H2.200C1.500 13 1 12.500 1 11.800zM3 5.300v5.900h.9V5.300zM5.050 5.300v5.900h.9V5.300zM7.100 5.300v5.900H8V5.300z"/></svg></span></td></tr>
<tr class="o"><td style="text-align:left;padding-left:15px;font-size:0"><span class="ob" style="width:74px;background:#1c84f0;padding-left:19px"><svg style="left:5px;top:4px" width="11" height="11" viewBox="0 0 12 12"><path fill="#fff" d="M0 10.200L8.300 1.900l1.900 1.900-8.300 8.300z"/><path fill="#fff" d="M3 .200l.45 1.150 1.150.45-1.150.45L3 3.400l-.45-1.150-1.150-.45 1.150-.45zM10.800 5l.35.85.85.35-.85.35-.35.85-.35-.85-.85-.35.85-.35zM6.200 0l.25.600.600.250-.600.250-.250.600-.250-.600-.600-.250.600-.250zM11 .500l.25.600.600.250-.600.250-.250.600-.250-.600-.600-.250.600-.250z"/></svg>更新余额</span><span class="ob" style="width:75px;background:#f39c12;margin-left:4px;padding-left:20px"><svg style="left:5px;top:5px" width="11" height="10" viewBox="0 0 12 11"><path fill="none" stroke="#fff" stroke-width="1.200" d="M.600 1.600c0-.6.4-1 1-1h2.600c.6 0 1 .4 1 1v.4h5.200c.6 0 1 .4 1 1v6.400c0 .6-.4 1-1 1H1.600c-.6 0-1-.4-1-1z"/></svg>是否同步</span><span class="ob" style="width:50px;background:#1c84f0;margin-left:4px;padding-left:19px"><svg style="left:5px;top:4px" width="11" height="11" viewBox="0 0 12 12"><path fill="#fff" d="M0 10.200L8.300 1.900l1.900 1.900-8.300 8.300z"/><path fill="#fff" d="M3 .200l.45 1.150 1.150.45-1.150.45L3 3.400l-.45-1.150-1.150-.45 1.150-.45zM10.800 5l.35.85.85.35-.85.35-.35.85-.35-.85-.85-.35.85-.35zM6.200 0l.25.600.600.250-.600.250-.250.600-.250-.600-.600-.250.600-.250zM11 .500l.25.600.600.250-.600.250-.250.600-.250-.600-.600-.250.600-.250z"/></svg>提现</span><span class="ob" style="width:22px;background:#18bc9c;margin-left:4px"><svg style="left:5px;top:5px" width="11" height="11" viewBox="0 0 12 12"><path fill="#fff" d="M0 12l.6-3.700L7.700 1.200l3.100 3.100-7.100 7.100zM8.400 .600l.4-.4c.3-.3.800-.3 1.100 0l1.900 1.900c.3.300.3.800 0 1.100l-.4.400z"/></svg></span><span class="ob" style="width:22px;background:#f75444;margin-left:4px"><svg style="left:6px;top:4px" width="9" height="11" viewBox="0 0 11 13"><path fill="#fff" d="M0 1.800h3.500L4.300.500h2.400l.8 1.300H11V3.200H0z"/><path fill="#fff" fill-rule="evenodd" d="M1 3.900h9v7.900c0 .7-.5 1.200-1.200 1.200H2.200C1.500 13 1 12.500 1 11.800zM3 5.300v5.900h.9V5.300zM5.050 5.300v5.900h.9V5.300zM7.100 5.300v5.900H8V5.300z"/></svg></span></td></tr>
<tr class="e"><td style="text-align:left;padding-left:15px;font-size:0"><span class="ob" style="width:74px;background:#1c84f0;padding-left:19px"><svg style="left:5px;top:4px" width="11" height="11" viewBox="0 0 12 12"><path fill="#fff" d="M0 10.200L8.300 1.900l1.900 1.900-8.300 8.300z"/><path fill="#fff" d="M3 .200l.45 1.150 1.150.45-1.150.45L3 3.400l-.45-1.150-1.150-.45 1.150-.45zM10.800 5l.35.85.85.35-.85.35-.35.85-.35-.85-.85-.35.85-.35zM6.200 0l.25.600.600.250-.600.250-.250.600-.250-.600-.600-.250.600-.250zM11 .500l.25.600.600.250-.600.250-.250.600-.250-.600-.600-.250.600-.250z"/></svg>更新余额</span><span class="ob" style="width:75px;background:#f39c12;margin-left:4px;padding-left:20px"><svg style="left:5px;top:5px" width="11" height="10" viewBox="0 0 12 11"><path fill="none" stroke="#fff" stroke-width="1.200" d="M.600 1.600c0-.6.4-1 1-1h2.600c.6 0 1 .4 1 1v.4h5.200c.6 0 1 .4 1 1v6.400c0 .6-.4 1-1 1H1.600c-.6 0-1-.4-1-1z"/></svg>是否同步</span><span class="ob" style="width:50px;background:#1c84f0;margin-left:4px;padding-left:19px"><svg style="left:5px;top:4px" width="11" height="11" viewBox="0 0 12 12"><path fill="#fff" d="M0 10.200L8.300 1.900l1.900 1.900-8.300 8.300z"/><path fill="#fff" d="M3 .200l.45 1.150 1.150.45-1.150.45L3 3.400l-.45-1.150-1.150-.45 1.150-.45zM10.800 5l.35.85.85.35-.85.35-.35.85-.35-.85-.85-.35.85-.35zM6.200 0l.25.600.600.250-.600.250-.250.600-.250-.600-.600-.250.600-.250zM11 .500l.25.600.600.250-.600.250-.250.600-.250-.600-.600-.250.600-.250z"/></svg>提现</span><span class="ob" style="width:22px;background:#18bc9c;margin-left:4px"><svg style="left:5px;top:5px" width="11" height="11" viewBox="0 0 12 12"><path fill="#fff" d="M0 12l.6-3.700L7.700 1.200l3.100 3.100-7.100 7.100zM8.400 .600l.4-.4c.3-.3.800-.3 1.100 0l1.900 1.900c.3.300.3.800 0 1.100l-.4.400z"/></svg></span><span class="ob" style="width:22px;background:#f75444;margin-left:4px"><svg style="left:6px;top:4px" width="9" height="11" viewBox="0 0 11 13"><path fill="#fff" d="M0 1.800h3.500L4.300.500h2.400l.8 1.300H11V3.200H0z"/><path fill="#fff" fill-rule="evenodd" d="M1 3.900h9v7.900c0 .7-.5 1.200-1.200 1.200H2.200C1.500 13 1 12.500 1 11.800zM3 5.300v5.900h.9V5.300zM5.050 5.300v5.900h.9V5.300zM7.100 5.300v5.900H8V5.300z"/></svg></span></td></tr>
<tr class="o"><td style="text-align:left;padding-left:15px;font-size:0"><span class="ob" style="width:74px;background:#1c84f0;padding-left:19px"><svg style="left:5px;top:4px" width="11" height="11" viewBox="0 0 12 12"><path fill="#fff" d="M0 10.200L8.300 1.900l1.900 1.900-8.300 8.300z"/><path fill="#fff" d="M3 .200l.45 1.150 1.150.45-1.150.45L3 3.400l-.45-1.150-1.150-.45 1.150-.45zM10.800 5l.35.85.85.35-.85.35-.35.85-.35-.85-.85-.35.85-.35zM6.200 0l.25.600.600.250-.600.250-.250.600-.250-.600-.600-.250.600-.250zM11 .500l.25.600.600.250-.600.250-.250.600-.250-.600-.600-.250.600-.250z"/></svg>更新余额</span><span class="ob" style="width:75px;background:#f39c12;margin-left:4px;padding-left:20px"><svg style="left:5px;top:5px" width="11" height="10" viewBox="0 0 12 11"><path fill="none" stroke="#fff" stroke-width="1.200" d="M.600 1.600c0-.6.4-1 1-1h2.600c.6 0 1 .4 1 1v.4h5.200c.6 0 1 .4 1 1v6.400c0 .6-.4 1-1 1H1.600c-.6 0-1-.4-1-1z"/></svg>是否同步</span><span class="ob" style="width:50px;background:#1c84f0;margin-left:4px;padding-left:19px"><svg style="left:5px;top:4px" width="11" height="11" viewBox="0 0 12 12"><path fill="#fff" d="M0 10.200L8.300 1.900l1.900 1.900-8.300 8.300z"/><path fill="#fff" d="M3 .200l.45 1.150 1.150.45-1.150.45L3 3.400l-.45-1.150-1.150-.45 1.150-.45zM10.800 5l.35.85.85.35-.85.35-.35.85-.35-.85-.85-.35.85-.35zM6.200 0l.25.600.600.250-.600.250-.250.600-.250-.600-.600-.250.600-.250zM11 .500l.25.600.600.250-.600.250-.250.600-.250-.600-.600-.250.600-.250z"/></svg>提现</span><span class="ob" style="width:22px;background:#18bc9c;margin-left:4px"><svg style="left:5px;top:5px" width="11" height="11" viewBox="0 0 12 12"><path fill="#fff" d="M0 12l.6-3.700L7.700 1.200l3.100 3.100-7.100 7.100zM8.400 .600l.4-.4c.3-.3.800-.3 1.100 0l1.900 1.900c.3.300.3.800 0 1.100l-.4.400z"/></svg></span><span class="ob" style="width:22px;background:#f75444;margin-left:4px"><svg style="left:6px;top:4px" width="9" height="11" viewBox="0 0 11 13"><path fill="#fff" d="M0 1.800h3.500L4.300.500h2.400l.8 1.300H11V3.200H0z"/><path fill="#fff" fill-rule="evenodd" d="M1 3.900h9v7.900c0 .7-.5 1.200-1.200 1.200H2.200C1.500 13 1 12.500 1 11.800zM3 5.300v5.900h.9V5.300zM5.050 5.300v5.900h.9V5.300zM7.100 5.300v5.900H8V5.300z"/></svg></span></td></tr>
<tr class="e"><td style="text-align:left;padding-left:15px;font-size:0"><span class="ob" style="width:74px;background:#1c84f0;padding-left:19px"><svg style="left:5px;top:4px" width="11" height="11" viewBox="0 0 12 12"><path fill="#fff" d="M0 10.200L8.300 1.900l1.900 1.900-8.300 8.300z"/><path fill="#fff" d="M3 .200l.45 1.150 1.150.45-1.150.45L3 3.400l-.45-1.150-1.150-.45 1.150-.45zM10.800 5l.35.85.85.35-.85.35-.35.85-.35-.85-.85-.35.85-.35zM6.200 0l.25.600.600.250-.600.250-.250.600-.250-.600-.600-.250.600-.250zM11 .500l.25.600.600.250-.600.250-.250.600-.250-.600-.600-.250.600-.250z"/></svg>更新余额</span><span class="ob" style="width:75px;background:#f39c12;margin-left:4px;padding-left:20px"><svg style="left:5px;top:5px" width="11" height="10" viewBox="0 0 12 11"><path fill="none" stroke="#fff" stroke-width="1.200" d="M.600 1.600c0-.6.4-1 1-1h2.600c.6 0 1 .4 1 1v.4h5.200c.6 0 1 .4 1 1v6.400c0 .6-.4 1-1 1H1.600c-.6 0-1-.4-1-1z"/></svg>是否同步</span><span class="ob" style="width:50px;background:#1c84f0;margin-left:4px;padding-left:19px"><svg style="left:5px;top:4px" width="11" height="11" viewBox="0 0 12 12"><path fill="#fff" d="M0 10.200L8.300 1.900l1.900 1.900-8.300 8.300z"/><path fill="#fff" d="M3 .200l.45 1.150 1.150.45-1.150.45L3 3.400l-.45-1.150-1.150-.45 1.150-.45zM10.800 5l.35.85.85.35-.85.35-.35.85-.35-.85-.85-.35.85-.35zM6.200 0l.25.600.600.250-.600.250-.250.600-.250-.600-.600-.250.600-.250zM11 .500l.25.600.600.250-.600.250-.250.600-.250-.600-.600-.250.600-.250z"/></svg>提现</span><span class="ob" style="width:22px;background:#18bc9c;margin-left:4px"><svg style="left:5px;top:5px" width="11" height="11" viewBox="0 0 12 12"><path fill="#fff" d="M0 12l.6-3.700L7.700 1.200l3.100 3.100-7.100 7.100zM8.400 .600l.4-.4c.3-.3.800-.3 1.100 0l1.900 1.900c.3.300.3.800 0 1.100l-.4.400z"/></svg></span><span class="ob" style="width:22px;background:#f75444;margin-left:4px"><svg style="left:6px;top:4px" width="9" height="11" viewBox="0 0 11 13"><path fill="#fff" d="M0 1.800h3.500L4.300.500h2.400l.8 1.300H11V3.200H0z"/><path fill="#fff" fill-rule="evenodd" d="M1 3.900h9v7.900c0 .7-.5 1.200-1.200 1.200H2.200C1.500 13 1 12.500 1 11.800zM3 5.300v5.900h.9V5.300zM5.050 5.300v5.900h.9V5.300zM7.100 5.300v5.900H8V5.300z"/></svg></span></td></tr>
<tr class="o"><td style="text-align:left;padding-left:15px;font-size:0"><span class="ob" style="width:74px;background:#1c84f0;padding-left:19px"><svg style="left:5px;top:4px" width="11" height="11" viewBox="0 0 12 12"><path fill="#fff" d="M0 10.200L8.300 1.900l1.900 1.900-8.300 8.300z"/><path fill="#fff" d="M3 .200l.45 1.150 1.150.45-1.150.45L3 3.400l-.45-1.150-1.150-.45 1.150-.45zM10.800 5l.35.85.85.35-.85.35-.35.85-.35-.85-.85-.35.85-.35zM6.200 0l.25.600.600.250-.600.250-.250.600-.250-.600-.600-.250.600-.250zM11 .500l.25.600.600.250-.600.250-.250.600-.250-.600-.600-.250.600-.250z"/></svg>更新余额</span><span class="ob" style="width:75px;background:#f39c12;margin-left:4px;padding-left:20px"><svg style="left:5px;top:5px" width="11" height="10" viewBox="0 0 12 11"><path fill="none" stroke="#fff" stroke-width="1.200" d="M.600 1.600c0-.6.4-1 1-1h2.600c.6 0 1 .4 1 1v.4h5.200c.6 0 1 .4 1 1v6.400c0 .6-.4 1-1 1H1.600c-.6 0-1-.4-1-1z"/></svg>是否同步</span><span class="ob" style="width:50px;background:#1c84f0;margin-left:4px;padding-left:19px"><svg style="left:5px;top:4px" width="11" height="11" viewBox="0 0 12 12"><path fill="#fff" d="M0 10.200L8.300 1.900l1.900 1.900-8.300 8.300z"/><path fill="#fff" d="M3 .200l.45 1.150 1.150.45-1.150.45L3 3.400l-.45-1.150-1.150-.45 1.150-.45zM10.800 5l.35.85.85.35-.85.35-.35.85-.35-.85-.85-.35.85-.35zM6.200 0l.25.600.600.250-.600.250-.250.600-.250-.600-.600-.250.600-.250zM11 .500l.25.600.600.250-.600.250-.250.600-.250-.600-.600-.250.600-.250z"/></svg>提现</span><span class="ob" style="width:22px;background:#18bc9c;margin-left:4px"><svg style="left:5px;top:5px" width="11" height="11" viewBox="0 0 12 12"><path fill="#fff" d="M0 12l.6-3.700L7.700 1.200l3.100 3.100-7.100 7.100zM8.400 .600l.4-.4c.3-.3.800-.3 1.100 0l1.900 1.900c.3.300.3.800 0 1.100l-.4.400z"/></svg></span><span class="ob" style="width:22px;background:#f75444;margin-left:4px"><svg style="left:6px;top:4px" width="9" height="11" viewBox="0 0 11 13"><path fill="#fff" d="M0 1.800h3.500L4.300.500h2.400l.8 1.300H11V3.200H0z"/><path fill="#fff" fill-rule="evenodd" d="M1 3.900h9v7.900c0 .7-.5 1.200-1.200 1.200H2.200C1.500 13 1 12.500 1 11.800zM3 5.300v5.900h.9V5.300zM5.050 5.300v5.900h.9V5.300zM7.100 5.300v5.900H8V5.300z"/></svg></span></td></tr>
<tr class="e"><td style="text-align:left;padding-left:15px;font-size:0"><span class="ob" style="width:74px;background:#1c84f0;padding-left:19px"><svg style="left:5px;top:4px" width="11" height="11" viewBox="0 0 12 12"><path fill="#fff" d="M0 10.200L8.300 1.900l1.900 1.900-8.300 8.300z"/><path fill="#fff" d="M3 .200l.45 1.150 1.150.45-1.150.45L3 3.400l-.45-1.150-1.150-.45 1.150-.45zM10.800 5l.35.85.85.35-.85.35-.35.85-.35-.85-.85-.35.85-.35zM6.200 0l.25.600.600.250-.600.250-.250.600-.250-.600-.600-.250.600-.250zM11 .500l.25.600.600.250-.600.250-.250.600-.250-.600-.600-.250.600-.250z"/></svg>更新余额</span><span class="ob" style="width:75px;background:#f39c12;margin-left:4px;padding-left:20px"><svg style="left:5px;top:5px" width="11" height="10" viewBox="0 0 12 11"><path fill="none" stroke="#fff" stroke-width="1.200" d="M.600 1.600c0-.6.4-1 1-1h2.600c.6 0 1 .4 1 1v.4h5.200c.6 0 1 .4 1 1v6.400c0 .6-.4 1-1 1H1.600c-.6 0-1-.4-1-1z"/></svg>是否同步</span><span class="ob" style="width:50px;background:#1c84f0;margin-left:4px;padding-left:19px"><svg style="left:5px;top:4px" width="11" height="11" viewBox="0 0 12 12"><path fill="#fff" d="M0 10.200L8.300 1.900l1.900 1.900-8.300 8.300z"/><path fill="#fff" d="M3 .200l.45 1.150 1.150.45-1.150.45L3 3.400l-.45-1.150-1.150-.45 1.150-.45zM10.800 5l.35.85.85.35-.85.35-.35.85-.35-.85-.85-.35.85-.35zM6.200 0l.25.600.600.250-.600.250-.250.600-.250-.600-.600-.250.600-.250zM11 .500l.25.600.600.250-.600.250-.250.600-.250-.600-.600-.250.600-.250z"/></svg>提现</span><span class="ob" style="width:22px;background:#18bc9c;margin-left:4px"><svg style="left:5px;top:5px" width="11" height="11" viewBox="0 0 12 12"><path fill="#fff" d="M0 12l.6-3.700L7.700 1.200l3.100 3.100-7.100 7.100zM8.400 .600l.4-.4c.3-.3.800-.3 1.100 0l1.900 1.900c.3.300.3.800 0 1.100l-.4.400z"/></svg></span><span class="ob" style="width:22px;background:#f75444;margin-left:4px"><svg style="left:6px;top:4px" width="9" height="11" viewBox="0 0 11 13"><path fill="#fff" d="M0 1.800h3.500L4.300.500h2.400l.8 1.300H11V3.200H0z"/><path fill="#fff" fill-rule="evenodd" d="M1 3.900h9v7.900c0 .7-.5 1.200-1.200 1.200H2.200C1.500 13 1 12.500 1 11.800zM3 5.300v5.900h.9V5.300zM5.050 5.300v5.900h.9V5.300zM7.100 5.300v5.900H8V5.300z"/></svg></span></td></tr>
</tbody></table></div>
<div class="abs" style="left:260px;top:790px;width:1630px;height:17px;background:#f1f1f1"></div><div class="abs" style="left:277px;top:792px;width:1380px;height:13px;background:#c1c1c1"></div><svg class="abs" style="left:266px;top:795px" width="4" height="7" viewBox="0 0 4 7"><path d="M4 0v7L0 3.500z" fill="#a3a3a3"/></svg><svg class="abs" style="left:1880px;top:795px" width="4" height="7" viewBox="0 0 4 7"><path d="M0 0v7l4-3.500z" fill="#505050"/></svg>
<div class="abs" style="left:260px;top:824px;line-height:20px;white-space:nowrap">显示第 1 到第 10 条记录，总共 42 条记录 每页显示</div><div class="btn bdef" style="left:583px;top:819px;width:52px;height:33px;text-align:left;padding-left:13px;color:#444">10<svg class="abs" style="left:31px;top:14px" width="7" height="4" viewBox="0 0 7 4"><path fill="#444" d="M0 4h7L3.500 0z"/></svg></div><div class="abs" style="left:640px;top:824px;line-height:20px">条记录</div>
<div class="pg" style="left:1479px;width:68px;border-radius:3px 0 0 3px;">上一页</div><div class="pg" style="left:1546px;width:34px;background:#444c69;border-color:#444c69;color:#fff;">1</div><div class="pg" style="left:1580px;width:33px;">2</div><div class="pg" style="left:1612px;width:34px;">3</div><div class="pg" style="left:1645px;width:33px;">4</div><div class="pg" style="left:1677px;width:34px;">5</div><div class="pg" style="left:1710px;width:68px;border-radius:0 3px 3px 0;">下一页</div><div class="abs" style="left:1783px;top:817px;width:50px;height:34px;border:1px solid #d2d6de;background:#fff"></div><div class="btn bdef" style="left:1838px;top:818px;width:52px;height:33px;line-height:31px">跳转</div>
<div class="wm" style="left:204px;top:128px">玖福源码</div><div class="wm" style="left:844px;top:128px">玖福源码</div><div class="wm" style="left:1484px;top:128px">玖福源码</div><div class="wm" style="left:204px;top:434px">玖福源码</div><div class="wm" style="left:844px;top:434px">玖福源码</div><div class="wm" style="left:1484px;top:434px">玖福源码</div><div class="wm" style="left:204px;top:740px">玖福源码</div><div class="wm" style="left:844px;top:740px">玖福源码</div><div class="wm" style="left:1484px;top:740px">玖福源码</div>

</body>
</html>
